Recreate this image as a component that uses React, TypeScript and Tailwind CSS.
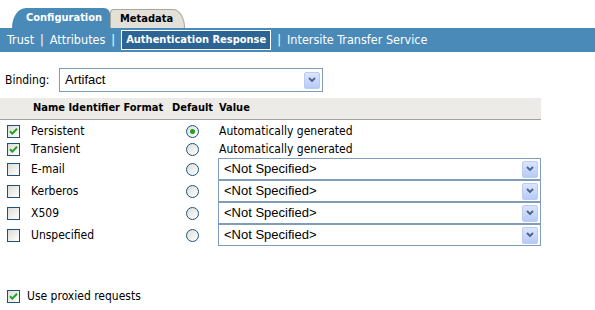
import React from "react";

const ui = "font-['DejaVu_Sans_Condensed','DejaVu_Sans',sans-serif] text-[12px]";

function Check({ checked }: { checked?: boolean }) {
  return (
    <span className="flex h-[13px] w-[13px] shrink-0 items-center justify-center border border-[#1c5180] bg-gradient-to-br from-[#dcdcd7] to-white">
      {checked && (
        <svg width="9" height="9" viewBox="0 0 9 9">
          <path d="M1 4.2 L3.3 6.6 L8 1.8" fill="none" stroke="#21a121" strokeWidth="2" />
        </svg>
      )}
    </span>
  );
}

function Radio({ checked }: { checked?: boolean }) {
  return (
    <span className="flex h-[13px] w-[13px] items-center justify-center rounded-full border border-[#1c5180] bg-gradient-to-br from-[#dcdcd7] to-white">
      {checked && <span className="h-[5px] w-[5px] rounded-full bg-[#21a121]" />}
    </span>
  );
}

function Arrow() {
  return (
    <span className="flex h-[17px] w-[16px] items-center justify-center rounded-[2px] border border-[#bccbef] bg-gradient-to-b from-[#dbe5fd] to-[#b6cbf8]">
      <svg width="8" height="6" viewBox="0 0 8 6">
        <path d="M1 1 L4 4 L7 1" fill="none" stroke="#4d6185" strokeWidth="1.8" />
      </svg>
    </span>
  );
}

function Select({ value, className }: { value: string; className: string }) {
  return (
    <div className={`flex items-center justify-between border border-[#7f9db9] bg-white pl-[5px] pr-[2px] font-['Liberation_Sans',sans-serif] text-[13px] text-black ${className}`}>
      <span>{value}</span>
      <Arrow />
    </div>
  );
}

const rows = [
  { name: "Persistent", checked: true, def: true, value: null },
  { name: "Transient", checked: true, def: false, value: null },
  { name: "E-mail", checked: false, def: false, value: "<Not Specified>" },
  { name: "Kerberos", checked: false, def: false, value: "<Not Specified>" },
  { name: "X509", checked: false, def: false, value: "<Not Specified>" },
  { name: "Unspecified", checked: false, def: false, value: "<Not Specified>" },
];

export default function App() {
  return (
    <div className={`h-[310px] w-[595px] overflow-hidden bg-white text-black ${ui}`}>
      <div className="flex h-[28px] items-end pl-[12px]">
        <div className="flex h-[20px] w-[98px] items-center rounded-tl-[14px_20px] rounded-tr-[6px] bg-[#4a8ab9] pl-[14px] text-[11px] font-bold text-white">
          Configuration
        </div>
        <div className="flex h-[19px] w-[75px] items-center rounded-tr-[12px_19px] rounded-tl-[4px] border border-b-0 border-[#a9a69a] bg-[#e2e0d8] pl-[9px] text-[11px] font-bold text-black">
          Metadata
        </div>
      </div>
      <div className="flex h-[24px] items-center bg-[#4a8ab9] pl-[7px] text-[12.5px] text-white">
        <span>Trust</span>
        <span className="px-[6px]">|</span>
        <span>Attributes</span>
        <span className="px-[6px]">|</span>
        <span className="border border-white bg-[#2c6494] px-[4px] py-[1px] text-[11px] font-bold">Authentication Response</span>
        <span className="px-[6px]">|</span>
        <span>Intersite Transfer Service</span>
      </div>

      <div className="mt-[16px] flex items-center pl-[5px]">
        <span className="w-[54px]">Binding:</span>
        <Select value="Artifact" className="h-[24px] w-[264px]" />
      </div>

      <div className="mt-[6px] w-[541px]">
        <div className="flex h-[22px] items-center border-b border-[#a0a0a0] bg-[#ecebe8] text-[11px] font-bold">
          <span className="w-[172px] pl-[33px]">Name Identifier Format</span>
          <span className="w-[47px]">Default</span>
          <span>Value</span>
        </div>
        <div className="pt-[2px]">
          {rows.map((r) => (
            <div key={r.name} className={`flex items-center ${r.value ? "h-[22px]" : "h-[18px]"}`}>
              <span className="flex w-[31px] pl-[7px]">
                <Check checked={r.checked} />
              </span>
              <span className="w-[155px]">{r.name}</span>
              <span className="w-[32px]">
                <Radio checked={r.def} />
              </span>
              {r.value ? (
                <Select value={r.value} className="h-[22px] flex-1" />
              ) : (
                <span className="pl-[1px]">Automatically generated</span>
              )}
            </div>
          ))}
        </div>
      </div>

      <div className="mt-[41px] flex items-center gap-[7px] pl-[7px]">
        <Check checked />
        <span>Use proxied requests</span>
      </div>
    </div>
  );
}
